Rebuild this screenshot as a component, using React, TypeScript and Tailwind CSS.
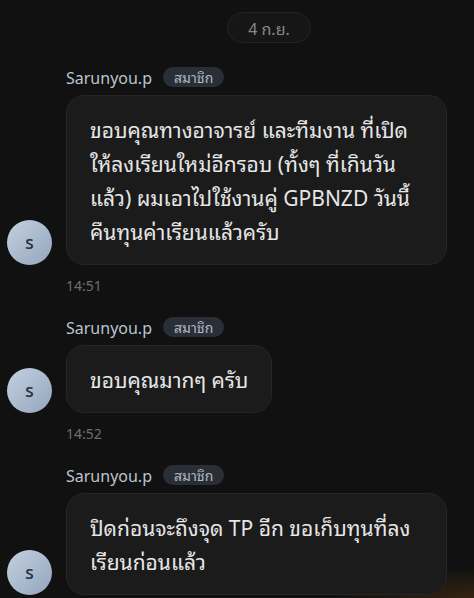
const font = { fontFamily: '"Noto Sans Thai Looped", "Noto Sans", "Noto Sans CJK SC", sans-serif' }

type Msg = {
  lines: string[]
  time?: string
  wide?: boolean
}

const messages: Msg[] = [
  {
    lines: [
      'ขอบคุณทางอาจารย์ และทีมงาน ที่เปิด',
      'ให้ลงเรียนใหม่อีกรอบ (ทั้งๆ ที่เกินวัน',
      'แล้ว) ผมเอาไปใช้งานคู่ GPBNZD วันนี้',
      'คืนทุนค่าเรียนแล้วครับ',
    ],
    time: '14:51',
    wide: true,
  },
  { lines: ['ขอบคุณมากๆ ครับ'], time: '14:52' },
  {
    lines: ['ปิดก่อนจะถึงจุด TP อีก ขอเก็บทุนที่ลง', 'เรียนก่อนแล้ว'],
    wide: true,
  },
]

function Avatar() {
  return (
    <div className="w-[45px] h-[45px] shrink-0 rounded-full bg-gradient-to-br from-[#c3d0e0] to-[#94a6bd] flex items-center justify-center text-[15px] font-semibold text-[#283244]">
      S
    </div>
  )
}

function Message({ msg }: { msg: Msg }) {
  return (
    <div className="pl-[7px]">
      <div className="flex items-end gap-[14px]">
        <Avatar />
        <div className="flex flex-col">
          <div className="flex items-center gap-[11px] h-[20px]">
            <span className="text-[16px] text-[#bcc5cf]">Sarunyou.p</span>
            <span className="h-[20px] px-[11px] rounded-full bg-[#2a2f37] text-[14px] leading-[20px] text-[#aeb8c4]">สมาชิก</span>
          </div>
          <div
            className={`mt-2 rounded-[18px] border border-[#262626] bg-[#1b1b1b] px-[23px] py-[16px] text-[21px] leading-[34px] text-[#e6e6e6] whitespace-nowrap ${msg.wide ? 'w-[381px]' : 'w-fit'}`}
          >
            {msg.lines.map((l, i) => (
              <div key={i}>{l}</div>
            ))}
          </div>
        </div>
      </div>
      {msg.time && (
        <div className="ml-[59px] mt-[11px] text-[14px] leading-[18px] text-[#6e6e6e]">{msg.time}</div>
      )}
    </div>
  )
}

export default function App() {
  return (
    <div
      style={font}
      className="w-[474px] h-[598px] overflow-hidden bg-[#111111] bg-[radial-gradient(140px_30px_at_100%_100%,rgba(120,70,20,0.35),transparent)]"
    >
      <div className="flex justify-center pl-[64px] pt-[12px]">
        <div className="w-[84px] h-[31px] rounded-full border border-[#242424] bg-[#161616] flex items-center justify-center text-[16px] text-[#8a8a8a]">
          4 ก.ย.
        </div>
      </div>
      <div className="mt-[24px] flex flex-col gap-[23px]">
        {messages.map((m, i) => (
          <Message key={i} msg={m} />
        ))}
      </div>
    </div>
  )
}
